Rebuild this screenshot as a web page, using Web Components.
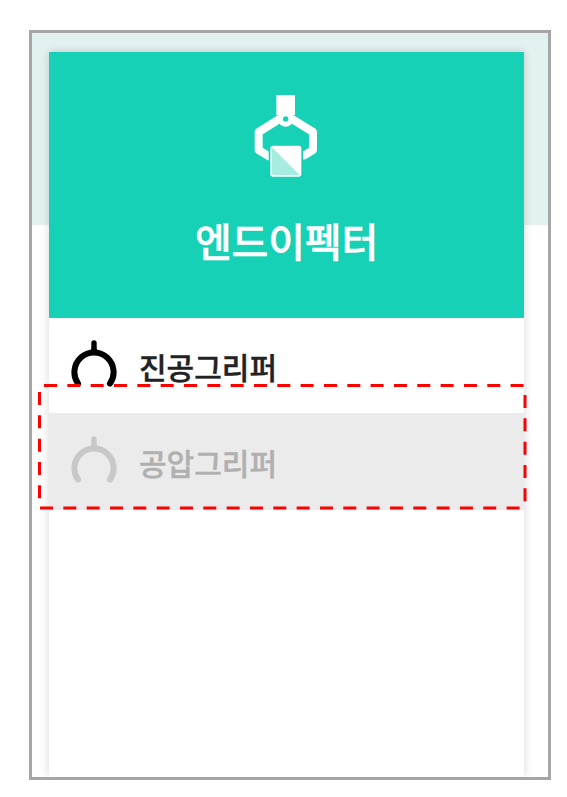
<!DOCTYPE html>
<html lang="ko">
<head>
<meta charset="utf-8">
<title>엔드이펙터</title>
<style>
  html, body { margin: 0; background: #fff; }
  body { width: 567px; height: 797px; overflow: hidden; position: relative; font-family: "Noto Sans CJK KR", "Noto Sans", sans-serif; }
</style>
</head>
<body>
<spec-frame>
  <effector-panel title="엔드이펙터">
    <gripper-row label="진공그리퍼"></gripper-row>
    <gripper-row label="공압그리퍼" disabled></gripper-row>
  </effector-panel>
</spec-frame>
<dash-mark></dash-mark>

<script>
// 바깥 회색 프레임
class SpecFrame extends HTMLElement {
  constructor() {
    super()
    this.attachShadow({ mode: 'open' }).innerHTML = `
      <style>
        :host {
          display: block;
          box-sizing: border-box;
          width: 522px;
          height: 750px;
          margin: 30px 0 0 29px;
          border: 3px solid #a6a6a6;
          overflow: hidden;
          background: linear-gradient(#e3f1f0 192px, #fff 192px);
        }
        .inner { padding: 19px 24px 0 17px; height: 100%; box-sizing: border-box; }
      </style>
      <div class="inner"><slot></slot></div>`
  }
}

// 헤더 + 목록 패널
class EffectorPanel extends HTMLElement {
  constructor() {
    super()
    this.attachShadow({ mode: 'open' })
  }
  connectedCallback() {
    const title = this.getAttribute('title') || ''
    this.shadowRoot.innerHTML = `
      <style>
        :host {
          display: block;
          height: 100%;
          background: #fff;
          box-shadow: 0 0 9px rgba(0,0,0,.16);
        }
        .head {
          box-sizing: border-box;
          height: 266px;
          background: #16d1b6;
          display: flex;
          flex-direction: column;
          align-items: center;
          padding-top: 43px;
          color: #fff;
        }
        svg { display: block; }
        h1 {
          margin: 36px 0 0;
          font-size: 40px;
          line-height: 52px;
          font-weight: 500;
          -webkit-text-stroke: 0.5px #fff;
          letter-spacing: -0.2px;
        }
      </style>
      <div class="head">
        <svg width="65" height="83" viewBox="165 45 195 249">
          <path d="M232 45h56v60h-56z" fill="#fff"/>
          <path d="M246 114 179 156v54l32 20M274 114l68 42v54l-26 16" fill="none" stroke="#fff" stroke-width="24" stroke-linejoin="round" stroke-linecap="round"/>
          <circle cx="260" cy="117" r="23" fill="#fff"/>
          <circle cx="260" cy="117" r="8" fill="#16d1b6"/>
          <rect x="209" y="192" width="103" height="103" rx="11" fill="#16d1b6"/>
          <rect x="214" y="197" width="93" height="93" rx="7" fill="#fff"/>
          <path d="M219 202 302 285H224a5 5 0 0 1-5-5z" fill="#a6ecdf"/>
        </svg>
        <h1>${title}</h1>
      </div>
      <slot></slot>`
  }
}

// 그리퍼 항목
class GripperRow extends HTMLElement {
  constructor() {
    super()
    this.attachShadow({ mode: 'open' })
  }
  connectedCallback() {
    const label = this.getAttribute('label') || ''
    this.shadowRoot.innerHTML = `
      <style>
        :host {
          display: flex;
          align-items: center;
          gap: 22px;
          box-sizing: border-box;
          height: 95px;
          padding-left: 22px;
          color: #222;
          --ic: #000;
        }
        :host([disabled]) {
          height: 97px;
          background: #ebebeb;
          color: #b0b0b0;
          --ic: #c8c8c8;
        }
        svg { display: block; flex: none; margin-bottom: 3px; }
        span { font-size: 30px; line-height: 40px; font-weight: 500; -webkit-text-stroke: 0.4px currentColor; }
      </style>
      <svg width="46" height="48" viewBox="0 -1 46 48">
        <path d="M7 42.500A19.600 19.600 0 1 1 39 42.500" fill="none" stroke="var(--ic)" stroke-width="6" stroke-linecap="round"/>
        <path d="M18.500 13.500C20.500 10 20.300 6 20.300 2a2.700 2.700 0 0 1 5.400 0C25.700 6 25.500 10 27.500 13.500z" fill="var(--ic)"/>
      </svg>
      <span>${label}</span>`
  }
}

// 빨간 점선 강조 표시
class DashMark extends HTMLElement {
  constructor() {
    super()
    this.attachShadow({ mode: 'open' }).innerHTML = `
      <style>
        :host { position: absolute; left: 0; top: 0; width: 567px; height: 797px; pointer-events: none; }
        svg { display: block; }
        line { stroke: #ff0000; stroke-width: 3; stroke-dasharray: 13 10.330; }
      </style>
      <svg width="567" height="797">
        <line x1="44" y1="385.500" x2="526" y2="385.500"/>
        <line x1="39.500" y1="392" x2="39.500" y2="507"/>
        <line x1="40" y1="508" x2="522" y2="508"/>
        <line x1="525" y1="395" x2="525" y2="505"/>
      </svg>`
  }
}

customElements.define('spec-frame', SpecFrame)
customElements.define('effector-panel', EffectorPanel)
customElements.define('gripper-row', GripperRow)
customElements.define('dash-mark', DashMark)
</script>
</body>
</html>
